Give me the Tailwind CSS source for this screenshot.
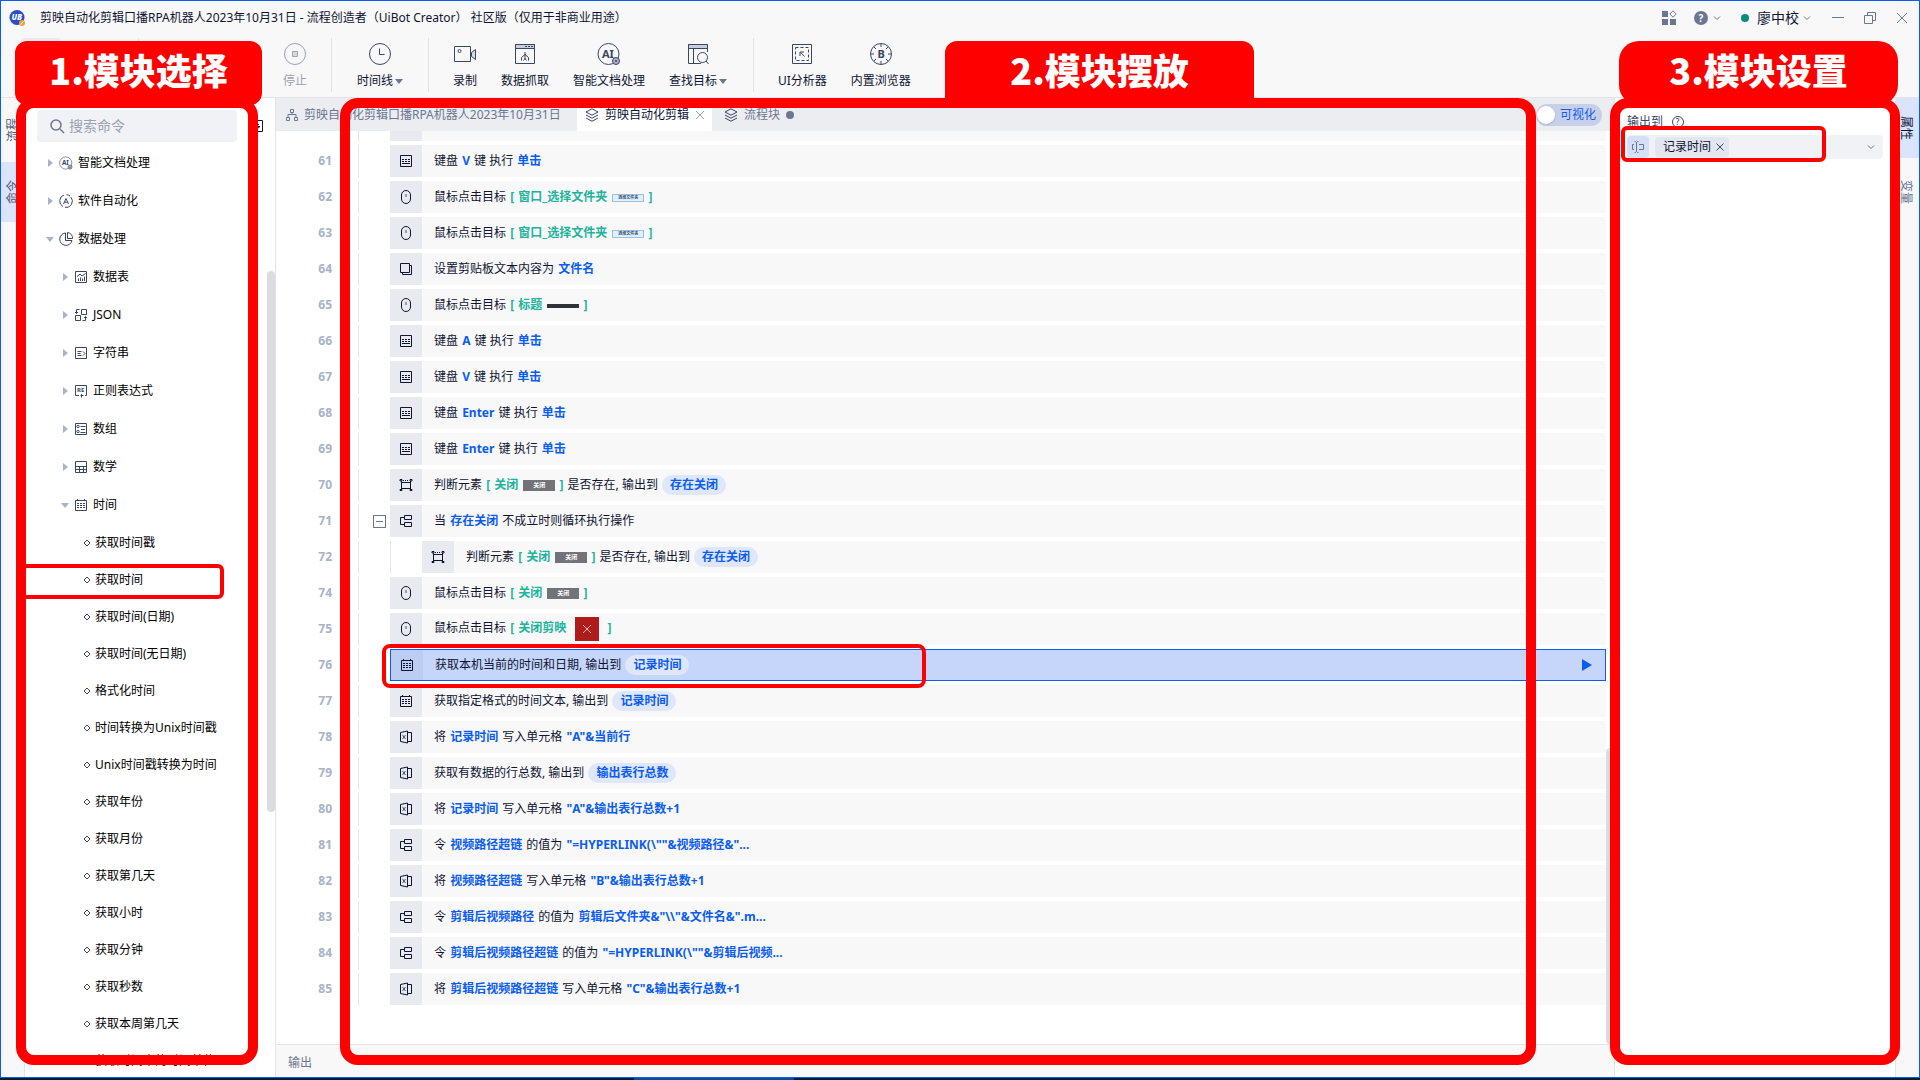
<!DOCTYPE html>
<html lang="zh-CN">
  <head>
    <meta charset="UTF-8" />
    <meta name="viewport" content="width=device-width, initial-scale=1.0" />
    <title>UiBot Creator</title>
    <script src="https://cdn.jsdelivr.net/npm/@tailwindcss/browser@4"></script>
  </head>
  <body class="h-screen flex flex-col overflow-hidden bg-[#f8f8f8] font-['Noto_Sans','Noto_Sans_CJK_SC',sans-serif] text-[12px] leading-4 text-[#0e1433]">
    <!-- Icon sprite -->
    <svg class="hidden">
      <symbol id="i-ai" viewBox="0 0 24 24">
        <circle cx="11.500" cy="12" r="10.500" fill="none" stroke="currentColor" />
        <text x="5" y="16" font-size="11" font-weight="700" fill="currentColor">AI</text>
        <circle cx="19" cy="19" r="3.500" fill="#a9b2c9" stroke="currentColor" />
        <circle cx="19" cy="19" r="1" fill="currentColor" />
      </symbol>
      <symbol id="i-auto" viewBox="0 0 14 14">
        <path d="M5 1a6.300 6.300 0 0 0-1 11.500M6 13.300A6.300 6.300 0 0 0 12 3.200M7.500.7a6 6 0 0 1 3.500 1.300" fill="none" stroke="currentColor" />
        <path d="M4.500 10 7 4.500 9.500 10M5.500 8.200h3" fill="none" stroke="currentColor" />
      </symbol>
      <symbol id="i-pie" viewBox="0 0 14 14" fill="none" stroke="currentColor">
        <path d="M6.500 1A6.200 6.200 0 1 0 13 8.500H6.500zM8.500.5v6h5A5.500 5.500 0 0 0 8.500.5z" />
      </symbol>
      <symbol id="i-sheet" viewBox="0 0 14 14" fill="none" stroke="currentColor">
        <path d="M1.500 1.500h11v11h-11zM4.500 11V8.500M6.500 11V7.500M8.500 11V8.500M10.500 11V6.500M3 6.500 6 4l2 2 3.500-2.500" />
      </symbol>
      <symbol id="i-json" viewBox="0 0 14 14" fill="none" stroke="currentColor">
        <path d="M7.500 1.500h5v5h-5zM1.500 7.500h5v5h-5zM5.500 1.500h-3v4M1 4l1.500 1.500L4 4M8.500 12.500h3v-4M10 10l1.500-1.500L13 10" />
      </symbol>
      <symbol id="i-str" viewBox="0 0 14 14" fill="none" stroke="currentColor">
        <path d="M1.500 1.500h11v11h-11zM3.500 5.500h4M3.500 7.500h3M3.500 9.500h4M9 5.500 11 7.500 9 9.500" />
      </symbol>
      <symbol id="i-re" viewBox="0 0 14 14" fill="none" stroke="currentColor">
        <path d="M5 11.500H1.500v-10h11v10H11M6.500 11.500h3M7.500 10v3.500" />
        <text x="3" y="8" font-size="6" font-weight="700" fill="currentColor" stroke="none">RE</text>
      </symbol>
      <symbol id="i-arr" viewBox="0 0 14 14" fill="none" stroke="currentColor">
        <path d="M1.500 1.500h11v11h-11zM6.500 4.500h5M7 7.500h4M6.500 10.500h5" />
        <circle cx="4" cy="4.500" r="1.200" /><circle cx="4" cy="9.500" r="1.200" />
      </symbol>
      <symbol id="i-math" viewBox="0 0 14 14" fill="none" stroke="currentColor">
        <path d="M1.500 1.500h11v11h-11zM1.500 6.500h11M1.500 9.500h11M5.500 6.500v6M9.500 6.500v6" />
      </symbol>
      <symbol id="i-cal" viewBox="0 0 14 14" fill="none" stroke="currentColor">
        <path d="M1.500 2.500h11v10h-11zM3.500 1v2M10.500 1v2" />
        <path d="M3 5.500h8M3 7.500h8M3 9.500h8" stroke-dasharray="2 1" />
      </symbol>
      <symbol id="i-key" viewBox="0 0 14 14" fill="none" stroke="currentColor">
        <path d="M1.500 1.500h11v11h-11zM3 9.500h8" />
        <path d="M3 5.500h8M3 7.500h8" stroke-dasharray="2 1" />
      </symbol>
      <symbol id="i-mouse" viewBox="0 0 14 14" fill="none" stroke="currentColor">
        <rect x="2.500" y=".5" width="9" height="13" rx="4.500" /><path d="M7 4v3" stroke-opacity=".7" />
      </symbol>
      <symbol id="i-copy" viewBox="0 0 14 14" fill="none" stroke="currentColor">
        <path d="M1.500 1.500h9v9h-9zM11 3.500h1.500v9h-9V11" />
      </symbol>
      <symbol id="i-elem" viewBox="0 0 14 14" fill="none" stroke="currentColor">
        <path d="M2.500 3v8M11.500 3v8M3 4.500h8M3 10.500h8" />
        <path d="M1 1.500h2v1.500h-2zM11 1.500h2v1.500h-2zM1 11.500h2v1h-2zM11 11.500h2v1h-2z" />
        <path d="M4 2.500h6" stroke-dasharray="1 1" />
      </symbol>
      <symbol id="i-flow" viewBox="0 0 14 14" fill="none" stroke="currentColor">
        <path d="M5.500 1.500h7v4h-7zM5.500 8.500h7v4h-7zM5.500 3.500h-4v7h4" />
      </symbol>
      <symbol id="i-excel" viewBox="0 0 14 14" fill="none" stroke="currentColor">
        <path d="M8.500 1v12l-7-1.500v-9zM8.500 2.500h4v9h-4" />
        <path d="M3.500 5l3 4M6.500 5l-3 4" stroke-opacity=".7" />
      </symbol>
      <symbol id="i-layers" viewBox="0 0 14 14" fill="none" stroke="currentColor">
        <path d="M7 .8 13 4 7 7.200 1 4zM1 7l6 3.200L13 7M1 10l6 3.200L13 10" />
      </symbol>
      <symbol id="i-chev" viewBox="0 0 8 8" fill="none" stroke="currentColor">
        <path d="m1 2.500 3 3 3-3" />
      </symbol>
    </svg>

    <div class="flex-1 min-h-0 flex flex-col border border-[#0b5cf0]">
      <!-- Title bar -->
      <header class="flex h-[33px] shrink-0 items-center pl-2 pr-2.5">
        <svg class="size-4" viewBox="0 0 16 16">
          <circle cx="8" cy="7.500" r="7.500" fill="#2a4fc4" />
          <text x="2.500" y="10" font-size="8" font-weight="800" font-style="italic" fill="#fff">UB</text>
          <circle cx="13" cy="13" r="3" fill="#eea23c" /><path d="m11.500 14.500 3-3" stroke="#fff" />
        </svg>
        <h1 class="ml-[15px] whitespace-nowrap">剪映自动化剪辑口播RPA机器人2023年10月31日 - 流程创造者（UiBot Creator） 社区版（仅用于非商业用途）</h1>
        <div class="ml-auto flex items-center text-[#6b7691]">
          <button aria-label="应用" class="mr-4">
            <svg class="size-4" viewBox="0 0 16 16" fill="currentColor">
              <path d="M1 1h6v6H1zM1 9h6v6H1zM9 9h6v6H9z" />
              <path d="M12 .8 15.200 4 12 7.200 8.800 4z" fill="none" stroke="currentColor" />
            </svg>
          </button>
          <button aria-label="帮助" class="mr-5 flex items-center gap-1">
            <svg class="size-4" viewBox="0 0 16 16">
              <circle cx="8" cy="8" r="7" fill="currentColor" />
              <text x="5.500" y="11.500" font-size="10" font-weight="700" fill="#fff">?</text>
            </svg>
            <svg class="size-2"><use href="#i-chev" /></svg>
          </button>
          <button class="mr-5 flex items-center">
            <span class="mr-2 size-2 rounded-full bg-[#058d7d]"></span>
            <span class="mr-1 text-[14px] text-[#0e1433]">廖中校</span>
            <svg class="size-2"><use href="#i-chev" /></svg>
          </button>
          <button aria-label="最小化" class="mr-[18px]"><svg class="size-3.5" viewBox="0 0 14 14"><path d="M1 6.500h12" stroke="currentColor" /></svg></button>
          <button aria-label="还原" class="mr-[18px]"><svg class="size-3.5" viewBox="0 0 14 14" fill="none" stroke="currentColor"><path d="M1.500 4.500h8v8h-8zM4.500 4.500v-3h8v8h-3" /></svg></button>
          <button aria-label="关闭"><svg class="size-3.5" viewBox="0 0 14 14" stroke="currentColor"><path d="m2 2 10 10M12 2 2 12" /></svg></button>
        </div>
      </header>

      <!-- Toolbar -->
      <nav class="flex h-16 shrink-0 border-b border-[#e3e4e8] pt-1 text-[#3b4663]">
        <div class="h-[54px] w-[138px] border-r border-[#e0e2e8] pl-5"><div class="h-10 w-10 rounded bg-[#e9eaf0]"></div></div>
        <div class="flex h-[54px] w-[193px] justify-end border-r border-[#e0e2e8] pr-5">
          <button class="flex flex-col items-center gap-[3px] text-[#9aa2b5]">
            <svg class="size-8" viewBox="0 0 32 32" fill="none" stroke="currentColor"><circle cx="16" cy="16" r="10.500" /><path d="M13.500 13.500h5v5h-5z" fill="#d5d9e3" /></svg>
            <span>停止</span>
          </button>
        </div>
        <div class="flex h-[54px] w-[97px] justify-center border-r border-[#e0e2e8]">
          <button class="flex flex-col items-center gap-[3px]">
            <svg class="size-8" viewBox="0 0 32 32" fill="none" stroke="currentColor"><circle cx="16" cy="16" r="10.500" /><path d="M15.500 10.500v6h5" /></svg>
            <span class="flex items-center gap-0.5 text-[#0e1433]">时间线<i class="border-x-4 border-t-[5px] border-x-transparent border-t-[#6b7691]"></i></span>
          </button>
        </div>
        <div class="flex h-[54px] w-[325px] gap-6 border-r border-[#e0e2e8] pl-6">
          <button class="flex flex-col items-center gap-[3px]">
            <svg class="-mx-1 size-8" viewBox="0 0 32 32" fill="none" stroke="currentColor"><path d="M5.500 8.500h16v15h-16z" /><circle cx="10.500" cy="13" r="1.500" /><path d="M22.500 14.500 26.500 11.500v10l-4-3z" fill="#d5d9e3" /></svg>
            <span class="text-[#0e1433]">录制</span>
          </button>
          <button class="flex flex-col items-center gap-[3px]">
            <svg class="size-8" viewBox="0 0 32 32" fill="none" stroke="currentColor"><path d="M6.500 6.500h19v4h-19z" fill="#c9cede" /><path d="M6.500 6.500h19v19h-19zM16 14v7M12.500 22.500v-3l3.500-3 3.500 3v3M14.500 22.500l1.500-2 1.500 2" /><path d="M16 8.500h8" stroke-dasharray="2 1" /></svg>
            <span class="text-[#0e1433]">数据抓取</span>
          </button>
          <button class="flex flex-col items-center gap-[3px]">
            <svg class="my-1 size-6"><use href="#i-ai" /></svg>
            <span class="text-[#0e1433]">智能文档处理</span>
          </button>
          <button class="flex flex-col items-center gap-[3px]">
            <svg class="size-8" viewBox="0 0 32 32" fill="none" stroke="currentColor"><path d="M6.500 6.500h19v4h-19z" fill="#c9cede" /><path d="M19 25.500H6.500v-19h19V14M11.500 10.500v15" /><circle cx="20.500" cy="19.500" r="5" /><path d="m24 23 2.500 3" /></svg>
            <span class="flex items-center gap-0.5 text-[#0e1433]">查找目标<i class="border-x-4 border-t-[5px] border-x-transparent border-t-[#6b7691]"></i></span>
          </button>
        </div>
        <div class="flex h-[54px] gap-6 pl-6">
          <button class="flex flex-col items-center gap-[3px]">
            <svg class="size-8" viewBox="0 0 32 32" fill="none" stroke="currentColor"><path d="M6.500 6.500h19v19h-19z" /><path d="M9.500 9.500h13v13h-13z" stroke-dasharray="3 2" /><path d="m18.500 18.500-4-4M14 18v-4h4" /></svg>
            <span class="text-[#0e1433]">UI分析器</span>
          </button>
          <button class="flex flex-col items-center gap-[3px]">
            <svg class="size-8" viewBox="0 0 32 32" fill="none" stroke="currentColor"><circle cx="16" cy="16" r="10.500" /><path d="M16 6v3M16 23v3M6 16h3M23 16h3M9 9l2 2M21 21l2 2M23 9l-2 2M9 23l2-2" /><text x="12.500" y="20" font-size="11" font-weight="700" fill="currentColor" stroke="none">B</text></svg>
            <span class="text-[#0e1433]">内置浏览器</span>
          </button>
        </div>
      </nav>

      <main class="flex min-h-0 flex-1">
        <!-- Command tree -->
        <section class="relative flex w-[275px] shrink-0 border-r border-[#e3e4e8] bg-white">
          <div class="flex w-6 shrink-0 flex-col border-r border-[#e3e4e8] bg-[#f8f8f8] text-[#4e5975]">
            <button class="flex h-16 items-center justify-center"><span class="rotate-180 [writing-mode:vertical-rl] [text-orientation:sideways]">流程</span></button>
            <button class="flex h-[60px] items-center justify-center bg-[#dae4fa]"><span class="rotate-180 [writing-mode:vertical-rl] [text-orientation:sideways]">命令</span></button>
          </div>
          <div class="flex min-w-0 flex-1 flex-col overflow-hidden">
            <div class="mt-3 flex items-center pl-3">
              <label class="flex h-8 w-[200px] items-center gap-1 rounded bg-[#f1f2f6] pl-3">
                <svg class="size-4" viewBox="0 0 16 16" fill="none" stroke="#6b7691" stroke-width="1.500"><circle cx="7" cy="7" r="5" /><path d="m11 11 4 4" /></svg>
                <input type="text" placeholder="搜索命令" aria-label="搜索命令" class="w-36 text-[14px] outline-none placeholder:text-[#9aa2b5]" />
              </label>
              <button aria-label="折叠" class="ml-[14px]"><svg class="size-3" viewBox="0 0 12 12" fill="none" stroke="#0e1433"><path d="M.5.5h11v11H.5zM3 4.500h5M6 6.500h3L6 9" /></svg></button>
            </div>
            <ul id="tree" class="mt-0.5 text-black"></ul>
          </div>
          <div class="absolute right-0 top-[173px] h-[541px] w-2 rounded-full bg-[#dbdcde]"></div>

          <!-- Callout 1 -->
          <div class="absolute left-5 top-[466px] h-[35px] w-[203px] rounded-md border-4 border-[#f00]"></div>
          <div class="absolute bottom-3 left-[15px] right-[17px] top-0 z-10 rounded-[18px] border-[10px] border-[#f00]"></div>
          <div class="absolute -top-[57px] left-3.5 z-10 flex h-16 w-[247px] justify-center rounded-xl bg-[#f00] pt-1 font-['Noto_Sans_CJK_SC',sans-serif] text-[36px] font-black leading-[48px] text-white">1.模块选择</div>
        </section>

        <!-- Flow editor -->
        <section class="relative flex min-w-0 flex-1 flex-col bg-white">
          <div class="flex h-[33px] shrink-0 items-center bg-[#ecedf1] text-[#6b7691]">
            <a href="#" class="flex h-full w-[301px] items-center gap-1.5 pl-2.5">
              <svg class="size-3" viewBox="0 0 12 12" fill="none" stroke="currentColor"><path d="M4.500.5h3v3h-3zM.5 8.500h3v3h-3zM8.500 8.500h3v3h-3zM6 3.500v2M2 8.500v-3h8v3" /></svg>
              剪映自动化剪辑口播RPA机器人2023年10月31日
            </a>
            <a href="#" class="flex h-full w-[135px] items-center gap-1.5 bg-white pl-2 text-[#0e1433]">
              <svg class="size-3.5 text-[#3b4663]"><use href="#i-layers" /></svg>
              剪映自动化剪辑
              <svg class="size-2.5" viewBox="0 0 10 10" stroke="#9aa2b5"><path d="m1 1 8 8M9 1 1 9" /></svg>
            </a>
            <a href="#" class="flex h-full items-center gap-1.5 pl-3">
              <svg class="size-3.5 text-[#3b4663]"><use href="#i-layers" /></svg>
              流程块
              <span class="size-2 rounded-full bg-[#6b7691]"></span>
            </a>
            <label class="ml-auto mr-3 flex h-[22px] w-[66px] items-center gap-[5px] rounded-full bg-[#c7cfe9] pl-px text-[#0b5cf0]">
              <input type="checkbox" class="size-[18px] appearance-none rounded-full bg-white shadow" />可视化
            </label>
          </div>
          <div class="min-h-0 flex-1 overflow-hidden pr-2">
            <div class="mb-1 ml-[82px] flex h-2.5 border-l border-[#e3e4e8] pl-[31px]">
              <div class="w-8 bg-[#e9eaf0]"></div><div class="flex-1 bg-[#f8f8f8]"></div>
            </div>
            <ol id="flow"></ol>
          </div>
          <div class="absolute bottom-[33px] right-0 h-[296px] w-2 rounded-full bg-[#dbdcde]"></div>
          <footer class="flex h-[33px] shrink-0 items-center border-t border-[#e3e4e8] bg-[#f8f8f8] pl-3 pt-1 text-[#6b7691]">输出</footer>

          <!-- Callout 2 -->
          <div class="absolute bottom-3 left-16 right-[78px] top-0 z-10 rounded-[18px] border-[10px] border-[#f00]"></div>
          <div class="absolute -top-[57px] left-[669px] z-10 flex h-[60px] w-[309px] justify-center rounded-t-xl bg-[#f00] pt-1 font-['Noto_Sans_CJK_SC',sans-serif] text-[36px] font-black leading-[48px] text-white">2.模块摆放</div>
          <div class="absolute left-[106px] top-[546px] z-10 h-[44px] w-[544px] rounded-lg border-4 border-[#f00]"></div>
        </section>

        <!-- Properties -->
        <section class="relative flex w-[305px] shrink-0 border-l border-[#e3e4e8] bg-white">
          <form class="min-w-0 flex-1 pl-3 pr-3 pt-[15px]">
            <label for="output" class="flex h-[18px] items-center gap-2 text-[#3b4663]">
              输出到
              <svg class="size-3.5" viewBox="0 0 14 14" fill="none" stroke="currentColor"><circle cx="7" cy="7" r="5.500" /><text x="4.800" y="10" font-size="8" font-weight="500" fill="currentColor" stroke="none">?</text></svg>
            </label>
            <div class="mt-1 flex h-6 items-center rounded bg-[#f1f2f6] text-[#6b7691]">
              <span class="flex h-[22px] w-[22px] shrink-0 items-center justify-center rounded-sm bg-[#d5dff7]">
                <svg class="size-3.5" viewBox="0 0 14 14" fill="none" stroke="currentColor"><path d="M3 4.500H1.500v5H3M8 4.500h4.500v5H8M5.500 2v10M3.500 1.500h1l1 1 1-1h1M3.500 12.500h1l1-1 1 1h1" /></svg>
              </span>
              <span class="ml-1.5 flex h-5 w-[74px] shrink-0 items-center gap-1 rounded bg-[#e3e5ef] pl-2 text-[#0e1433]">
                记录时间
                <button type="button" aria-label="移除"><svg class="size-2.5" viewBox="0 0 10 10" stroke="#3b4663"><path d="m1.500 1.500 7 7M8.500 1.500l-7 7" /></svg></button>
              </span>
              <input id="output" type="text" class="min-w-0 flex-1 outline-none" />
              <button type="button" aria-label="展开" class="mr-2"><svg class="size-2"><use href="#i-chev" /></svg></button>
            </div>
          </form>
          <div class="flex w-6 shrink-0 flex-col border-l border-[#e3e4e8] bg-[#f8f8f8] text-[#6b7691]">
            <button class="flex h-[60px] items-center bg-[#dae4fa] pl-0.5 text-[#0e1433]"><span class="[writing-mode:vertical-rl] [text-orientation:sideways]">属性</span></button>
            <button class="flex h-[68px] items-center pl-0.5"><span class="[writing-mode:vertical-rl] [text-orientation:sideways]">变量</span></button>
          </div>

          <!-- Callout 3 -->
          <div class="absolute left-1.5 top-7 h-9 w-[205px] rounded-md border-4 border-[#f00]"></div>
          <div class="absolute -left-[5px] bottom-3 right-[19px] top-0 z-10 rounded-[18px] border-[10px] border-[#f00]"></div>
          <div class="absolute -top-[57px] left-1 z-10 flex h-16 w-[279px] justify-center rounded-[20px] bg-[#f00] pt-1 font-['Noto_Sans_CJK_SC',sans-serif] text-[36px] font-black leading-[48px] text-white">3.模块设置</div>
        </section>
      </main>
    </div>

    <!-- Taskbar edge -->
    <div class="flex h-0.5 shrink-0 bg-[#0a1c35]"><div class="ml-[33%] w-40 bg-[#0c4a94]"></div></div>

    <script>
      const groups = [
        [0, 'ai', '智能文档处理'],
        [0, 'auto', '软件自动化'],
        [0, 'pie', '数据处理', true],
        [1, 'sheet', '数据表'],
        [1, 'json', 'JSON'],
        [1, 'str', '字符串'],
        [1, 're', '正则表达式'],
        [1, 'arr', '数组'],
        [1, 'math', '数学'],
        [1, 'cal', '时间', true],
      ];
      const leaves = ['获取时间戳', '获取时间', '获取时间(日期)', '获取时间(无日期)', '格式化时间', '时间转换为Unix时间戳', 'Unix时间戳转换为时间', '获取年份', '获取月份', '获取第几天', '获取小时', '获取分钟', '获取秒数', '获取本周第几天', '获取时间中的时间单位'];

      const closed = '<i class="mx-0.5 border-y-4 border-l-[5px] border-y-transparent border-l-[#a9b2c9]"></i>';
      const opened = '<i class="border-x-4 border-t-[5px] border-x-transparent border-t-[#a9b2c9]"></i>';
      const tree = document.getElementById('tree');
      groups.forEach(([level, icon, name, open]) => {
        tree.innerHTML += `
          <li class="flex h-[38px] items-center ${level ? 'pl-9' : 'pl-[21px]'}">
            <span class="flex w-[13px]">${open ? opened : closed}</span>
            <svg class="mr-[5px] size-3.5 shrink-0 text-[#3b4663]"><use href="#i-${icon}" /></svg>${name}
          </li>`;
      });
      leaves.forEach((name) => {
        tree.innerHTML += `
          <li class="flex h-[37px] items-center gap-1 whitespace-nowrap pl-[58px]">
            <svg class="size-2 shrink-0" viewBox="0 0 8 8" fill="none" stroke="#3b4663"><path d="M4 1 7 4 4 7 1 4z" /></svg>${name}
          </li>`;
      });

      // Rich text helpers for flow rows
      const v = (t) => `<b class="mx-px text-[#0b5cf0]">${t}</b>`;
      const g = (t, img) => `<b class="mx-px text-[#21b39b]">[ <span class="mx-px">${t}</span> ${img} ]</b>`;
      const pill = (t) => `<b class="ml-px inline-block h-5 rounded-full bg-[#dfe7fd] px-2 leading-5 text-[#0b5cf0]">${t}</b>`;
      const folder = '<i class="mx-px inline-block h-2 w-8 border border-[#94c3e8] bg-[#e3effa] text-center align-middle text-[4px] not-italic leading-[6px] text-[#3b4663]">选择文件夹</i>';
      const bar = '<i class="mx-px inline-block h-1 w-8 bg-[#32333a] align-middle"></i>';
      const shut = '<i class="mx-px inline-block h-[11px] w-8 bg-[#727279] text-center align-middle text-[6px] not-italic leading-[11px] text-white">关闭</i>';
      const cross = '<svg class="mx-[5px] inline size-6" viewBox="0 0 24 24"><path d="M0 0h24v24H0z" fill="#b01c1c" /><path d="m8 8 8 8M16 8l-8 8" stroke="#e8b5b5" /></svg>';

      const rows = [
        [61, 'key', `键盘 ${v('V')} 键 执行 ${v('单击')}`],
        [62, 'mouse', `鼠标点击目标 ${g('窗口_选择文件夹', folder)}`],
        [63, 'mouse', `鼠标点击目标 ${g('窗口_选择文件夹', folder)}`],
        [64, 'copy', `设置剪贴板文本内容为 ${v('文件名')}`],
        [65, 'mouse', `鼠标点击目标 ${g('标题', bar)}`],
        [66, 'key', `键盘 ${v('A')} 键 执行 ${v('单击')}`],
        [67, 'key', `键盘 ${v('V')} 键 执行 ${v('单击')}`],
        [68, 'key', `键盘 ${v('Enter')} 键 执行 ${v('单击')}`],
        [69, 'key', `键盘 ${v('Enter')} 键 执行 ${v('单击')}`],
        [70, 'elem', `判断元素 ${g('关闭', shut)} 是否存在, 输出到 ${pill('存在关闭')}`],
        [71, 'flow', `当 ${v('存在关闭')} 不成立时则循环执行操作`],
        [72, 'elem', `判断元素 ${g('关闭', shut)} 是否存在, 输出到 ${pill('存在关闭')}`],
        [74, 'mouse', `鼠标点击目标 ${g('关闭', shut)}`],
        [75, 'mouse', `鼠标点击目标 ${g('关闭剪映', cross)}`],
        [76, 'cal', `获取本机当前的时间和日期, 输出到 ${pill('记录时间')}`],
        [77, 'cal', `获取指定格式的时间文本, 输出到 ${pill('记录时间')}`],
        [78, 'excel', `将 ${v('记录时间')} 写入单元格 ${v('"A"&amp;当前行')}`],
        [79, 'excel', `获取有数据的行总数, 输出到 ${pill('输出表行总数')}`],
        [80, 'excel', `将 ${v('记录时间')} 写入单元格 ${v('"A"&amp;输出表行总数+1')}`],
        [81, 'flow', `令 ${v('视频路径超链')} 的值为 ${v('"=HYPERLINK(\\""&amp;视频路径&amp;"...')}`],
        [82, 'excel', `将 ${v('视频路径超链')} 写入单元格 ${v('"B"&amp;输出表行总数+1')}`],
        [83, 'flow', `令 ${v('剪辑后视频路径')} 的值为 ${v('剪辑后文件夹&amp;"\\\\"&amp;文件名&amp;".m...')}`],
        [84, 'flow', `令 ${v('剪辑后视频路径超链')} 的值为 ${v('"=HYPERLINK(\\""&amp;剪辑后视频...')}`],
        [85, 'excel', `将 ${v('剪辑后视频路径超链')} 写入单元格 ${v('"C"&amp;输出表行总数+1')}`],
      ];
      const fold = '<button aria-label="折叠" class="size-[13px] border border-[#6b7691]"><span class="mx-auto block h-px w-[7px] bg-[#6b7691]"></span></button>';
      const play = '<button aria-label="运行" class="ml-auto mr-[13px] border-y-[6px] border-l-[10px] border-y-transparent border-l-[#0b5cf0]"></button>';
      const flow = document.getElementById('flow');
      rows.forEach(([num, icon, html]) => {
        const active = num === 76;
        flow.innerHTML += `
          <li class="mb-1 flex h-8 items-center">
            <span class="w-14 text-right font-bold text-[#a9b2c9]">${num}</span>
            <span class="ml-[26px] flex h-full w-8 shrink-0 items-center justify-end border-l border-[#e3e4e8] pr-1">${num === 71 ? fold : ''}</span>
            ${num === 72 ? '<span class="h-full w-8 shrink-0 border-l border-[#e3e4e8]"></span>' : ''}
            <div class="${active ? 'border border-[#0b5cf0] bg-[#c5d6fa]' : 'bg-[#f8f8f8]'} flex h-full min-w-0 flex-1 items-center">
              <span class="${active ? 'bg-[#bdcdf2]' : 'bg-[#e9eaf0]'} flex h-full w-8 items-center justify-center"><svg class="size-3.5"><use href="#i-${icon}" /></svg></span>
              <p class="whitespace-nowrap pl-3">${html}</p>
              ${active ? play : ''}
            </div>
          </li>`;
      });
    </script>
  </body>
</html>
